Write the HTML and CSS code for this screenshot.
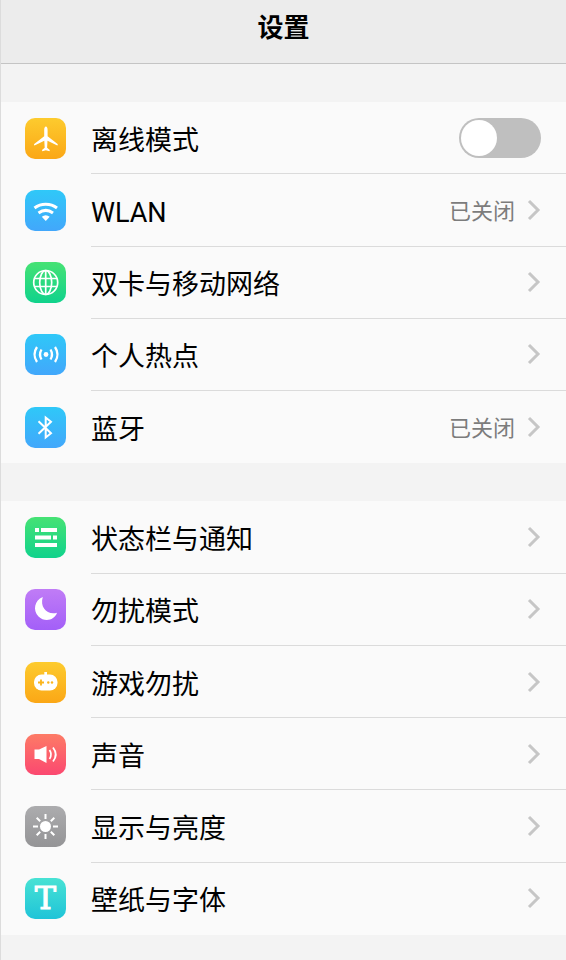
FILE: index.html
```html
<!DOCTYPE html>
<html lang="zh-CN">
<head>
<meta charset="utf-8">
<meta name="viewport" content="width=device-width, initial-scale=1">
<title>设置</title>
<link rel="stylesheet" href="styles.css">
</head>
<body>
<header class="bar"><h1 class="title">设置</h1></header>
<main class="settings">
  <ul class="group network">
    <li class="row">
      <svg class="icon orange" viewBox="0 0 41 41" aria-hidden="true"><path fill="#fff" d="M20.900 8.500c1 0 1.700 1.500 1.700 3.500v6.200l9.700 7.600c.9.800.5 2-.5 1.500L22.500 22.800l-.4 7 2.700 2.300-.3 1.200-3.600-1.100-3.600 1.100-.3-1.200 2.700-2.300-.4-7-9.300 4.500c-1 .5-1.400-.7-.5-1.500l9.700-7.600V12c0-2 .7-3.500 1.700-3.500z"/></svg>
      <div class="line">
        <label class="label" for="offline">离线模式</label>
        <input class="switch" type="checkbox" role="switch" id="offline">
      </div>
    </li>
    <li class="row">
      <svg class="icon blue" viewBox="0 0 41 41" aria-hidden="true"><g fill="none" stroke="#fff" stroke-width="3"><path d="M9.500 18c6.500-5 16-5 22.500 0M13.500 23c4.500-3.300 10-3.300 14.500 0"/></g><path fill="#fff" d="M16.800 26.800c2.500-2 5.400-2 7.900 0L20.750 31z"/></svg>
      <a class="line" href="#wlan"><span class="label">WLAN</span><span class="value">已关闭</span><svg class="chevron" viewBox="0 0 14 22" aria-hidden="true"><path d="M2 2l9 9-9 9"/></svg></a>
    </li>
    <li class="row">
      <svg class="icon green" viewBox="0 0 41 41" aria-hidden="true"><g fill="none" stroke="#fff" stroke-width="1.700"><circle cx="20.700" cy="20.500" r="12"/><ellipse cx="20.700" cy="20.500" rx="6" ry="12"/><path d="M20.700 8.500v24M9.400 16.500h22.600M9.400 24.500h22.600"/></g></svg>
      <a class="line" href="#mobile"><span class="label">双卡与移动网络</span><svg class="chevron" viewBox="0 0 14 22" aria-hidden="true"><path d="M2 2l9 9-9 9"/></svg></a>
    </li>
    <li class="row">
      <svg class="icon blue" viewBox="0 0 41 41" aria-hidden="true"><circle cx="21" cy="20.500" r="2.400" fill="#fff"/><g fill="none" stroke="#fff" stroke-width="2.300"><path d="M16.500 15.500q-3 5 0 10M25.500 15.500q3 5 0 10M12 13q-5 7.500 0 15M30 13q5 7.500 0 15"/></g></svg>
      <a class="line" href="#hotspot"><span class="label">个人热点</span><svg class="chevron" viewBox="0 0 14 22" aria-hidden="true"><path d="M2 2l9 9-9 9"/></svg></a>
    </li>
    <li class="row">
      <svg class="icon blue" viewBox="0 0 41 41" aria-hidden="true"><path fill="none" stroke="#fff" stroke-width="2" d="M13.500 14.200l12.500 12-5.300 4.300V10.500l5.300 4.300-12.500 12"/></svg>
      <a class="line" href="#bluetooth"><span class="label">蓝牙</span><span class="value">已关闭</span><svg class="chevron" viewBox="0 0 14 22" aria-hidden="true"><path d="M2 2l9 9-9 9"/></svg></a>
    </li>
  </ul>
  <ul class="group device">
    <li class="row">
      <svg class="icon green" viewBox="0 0 41 41" aria-hidden="true"><path fill="#fff" d="M10 11h4v4h-4zM16 11h16v4H16zM10 18.500h16v4H10zM28 18.500h4v4h-4zM10 26h22v4H10z"/></svg>
      <a class="line" href="#notifications"><span class="label">状态栏与通知</span><svg class="chevron" viewBox="0 0 14 22" aria-hidden="true"><path d="M2 2l9 9-9 9"/></svg></a>
    </li>
    <li class="row">
      <svg class="icon purple" viewBox="0 0 41 41" aria-hidden="true"><path fill="#fff" d="M17.800 8C9.500 11 7.500 21.500 13.500 27.500S29.500 31.500 32 23.800C22.500 26.500 14.500 18.500 17.800 8z"/></svg>
      <a class="line" href="#dnd"><span class="label">勿扰模式</span><svg class="chevron" viewBox="0 0 14 22" aria-hidden="true"><path d="M2 2l9 9-9 9"/></svg></a>
    </li>
    <li class="row">
      <svg class="icon orange" viewBox="0 0 41 41" aria-hidden="true"><rect x="9" y="12.500" width="23.500" height="16" rx="7.500" fill="#fff"/><path fill="#fff" d="M19.300 13v-3h2.700v3z"/><path fill="none" stroke="#fbb51c" stroke-width="1.800" d="M16 17.500v6M13 20.500h6"/><circle cx="23.300" cy="20.500" r="1.200" fill="#fbb51c"/><circle cx="27" cy="20.500" r="1.200" fill="#fbb51c"/></svg>
      <a class="line" href="#game"><span class="label">游戏勿扰</span><svg class="chevron" viewBox="0 0 14 22" aria-hidden="true"><path d="M2 2l9 9-9 9"/></svg></a>
    </li>
    <li class="row">
      <svg class="icon red" viewBox="0 0 41 41" aria-hidden="true"><path fill="#fff" d="M9.500 15.500h4.500l7.500-3.500v17l-7.500-4H9.500z"/><path fill="none" stroke="#fff" stroke-width="1.800" d="M24.500 16q3 4.500 0 9M28 13.500q5.500 7 0 14"/></svg>
      <a class="line" href="#sound"><span class="label">声音</span><svg class="chevron" viewBox="0 0 14 22" aria-hidden="true"><path d="M2 2l9 9-9 9"/></svg></a>
    </li>
    <li class="row">
      <svg class="icon gray" viewBox="0 0 41 41" aria-hidden="true"><circle cx="20.500" cy="20.500" r="5.500" fill="#fff"/><path stroke="#fff" stroke-width="2" d="M20.500 8v5M20.500 28v5M8 20.500h5M28 20.500h5M11.700 11.700l3.500 3.500M25.800 25.800l3.500 3.500M29.300 11.700l-3.500 3.500M15.200 25.800l-3.500 3.500"/></svg>
      <a class="line" href="#display"><span class="label">显示与亮度</span><svg class="chevron" viewBox="0 0 14 22" aria-hidden="true"><path d="M2 2l9 9-9 9"/></svg></a>
    </li>
    <li class="row">
      <span class="icon teal" aria-hidden="true">T</span>
      <a class="line" href="#theme"><span class="label">壁纸与字体</span><svg class="chevron" viewBox="0 0 14 22" aria-hidden="true"><path d="M2 2l9 9-9 9"/></svg></a>
    </li>
  </ul>
</main>
</body>
</html>
```
FILE: styles.css
```css
* {
  box-sizing: border-box;
}

body {
  display: flex;
  flex-direction: column;
  min-height: 100vh;
  margin: 0;
  border-left: 1px solid #dcdcdc;
  background: #f3f3f3;
  color: #000;
  font-family: Roboto, "Noto Sans CJK SC", sans-serif;
}

.bar {
  display: flex;
  align-items: center;
  justify-content: center;
  height: 64px;
  padding-bottom: 8px;
  border-bottom: 1px solid #c4c4c4;
  background: #ececec;
}

.title {
  margin: 0;
  font-size: 26px;
  line-height: 32px;
  font-weight: 700;
}

.settings {
  display: flex;
  flex: 1;
  flex-direction: column;
  gap: 38px;
  padding: 38px 0 25px;
}

.group {
  display: grid;
  grid-auto-rows: 1fr;
  margin: 0;
  padding: 0;
  background: #fafafa;
  list-style: none;
}

.network {
  flex: 5;
}

.device {
  flex: 6;
}

.row {
  display: flex;
  align-items: center;
  gap: 25px;
  min-height: 72px;
  padding-left: 24px;
}

.line {
  display: flex;
  flex: 1;
  align-items: center;
  align-self: stretch;
  padding-right: 25px;
  border-bottom: 1px solid #dbdbdb;
  color: inherit;
  text-decoration: none;
}

.row:last-child .line {
  border-bottom-color: transparent;
}

.label {
  flex: 1;
  padding-top: 6px;
  font-size: 27px;
  line-height: 36px;
}

.value {
  padding-top: 4px;
  color: #7c7c7c;
  font-size: 22px;
  line-height: 32px;
}

.chevron {
  width: 14px;
  height: 22px;
  margin-left: 12px;
  fill: none;
  stroke: #c6c6c6;
  stroke-width: 3;
}

.switch {
  width: 82px;
  height: 40px;
  margin: 0;
  padding: 2px;
  border-radius: 20px;
  background: #bfbfbf;
  appearance: none;
}

.switch::before {
  display: block;
  width: 36px;
  height: 36px;
  border-radius: 50%;
  background: #fff;
  content: "";
}

.switch:checked {
  background: #22d684;
}

.switch:checked::before {
  margin-left: auto;
}

.icon {
  display: block;
  width: 41px;
  height: 41px;
  border-radius: 10px;
}

.orange {
  background: linear-gradient(#fdcb2e, #fba716);
}

.blue {
  background: linear-gradient(#2fc8f8, #42a7fb);
}

.green {
  background: linear-gradient(#46e274, #10d28c);
}

.purple {
  background: linear-gradient(#c07cf6, #a35ff8);
}

.red {
  background: linear-gradient(#fd7b66, #fb4870);
}

.gray {
  background: linear-gradient(#acacae, #949496);
}

.teal {
  background: linear-gradient(#48e2d4, #1fc4d8);
  color: #fff;
  font-family: "DejaVu Serif", serif;
  font-size: 32px;
  line-height: 41px;
  text-align: center;
  -webkit-text-stroke: 1px #fff;
}
```
